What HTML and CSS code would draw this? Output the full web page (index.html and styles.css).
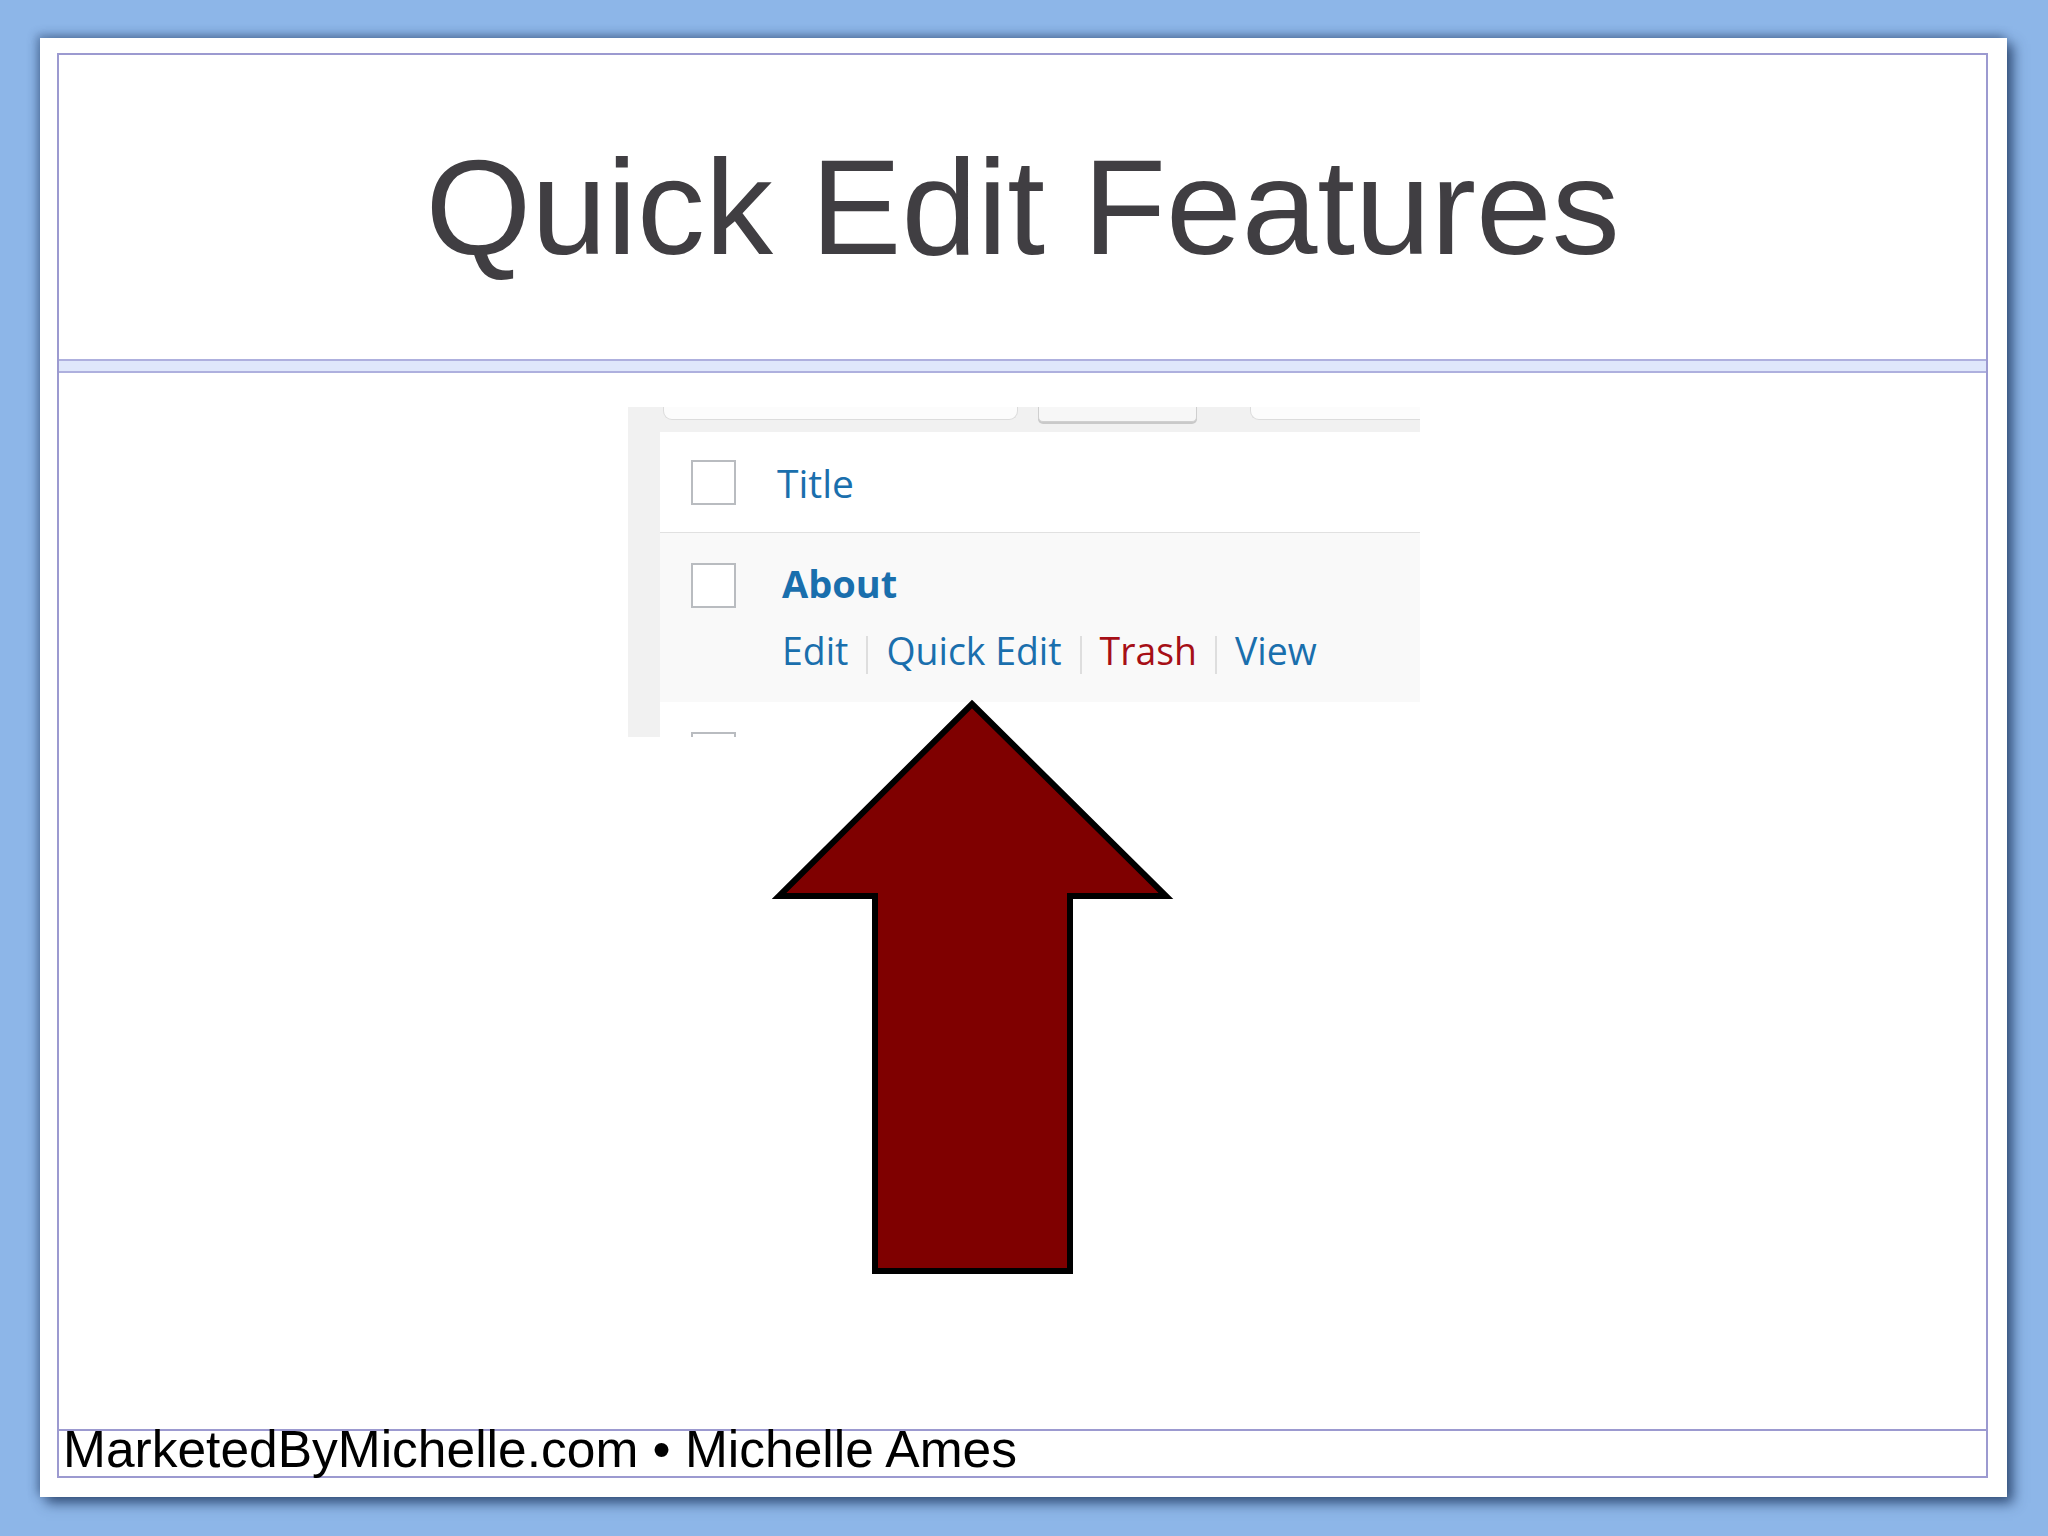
FILE: index.html
```html
<!DOCTYPE html>
<html lang="en">
<head>
<meta charset="utf-8">
<title>Quick Edit Features</title>
<link rel="stylesheet" href="styles.css">
</head>
<body>
<div class="slide">
  <div class="frame">
    <div class="title-area">
      <h1 class="title">Quick Edit Features</h1>
    </div>
    <div class="band"></div>
    <div class="content">
      <div class="shot">
        <div class="shot-side"></div>
        <div class="shot-main">
          <div class="toolbar">
            <div class="tb-search"></div>
            <div class="tb-btn"></div>
            <div class="tb-right"></div>
          </div>
          <div class="thead">
            <span class="cb"></span>
            <span class="col-title">Title</span>
          </div>
          <div class="trow">
            <span class="cb"></span>
            <div class="row-col">
              <div class="row-title">About</div>
              <div class="actions">
                <span class="act">Edit</span><span class="sep"></span><span class="act">Quick Edit</span><span class="sep"></span><span class="act trash">Trash</span><span class="sep"></span><span class="act">View</span>
              </div>
            </div>
          </div>
          <div class="tnext">
            <span class="cb"></span>
          </div>
        </div>
      </div>
      <svg class="arrow" width="405" height="582" viewBox="0 0 405 582" xmlns="http://www.w3.org/2000/svg">
        <polygon points="202,9 396,201 300,201 300,576 105,576 105,201 9,201" fill="#7f0000" stroke="#000" stroke-width="6" stroke-linejoin="miter"/>
      </svg>
    </div>
    <div class="footer">MarketedByMichelle.com • Michelle Ames</div>
  </div>
</div>
</body>
</html>
```
FILE: styles.css
```css
html, body {
  margin: 0;
  padding: 0;
}
body {
  width: 2048px;
  height: 1536px;
  background: #8db6e8;
  overflow: hidden;
  font-family: "Liberation Sans", Arial, sans-serif;
}
.slide {
  box-sizing: border-box;
  margin: 38px 0 0 40px;
  width: 1967px;
  height: 1459px;
  background: #ffffff;
  padding: 15px 19px 19px 17px;
  box-shadow: 6px 6px 12px rgba(30, 55, 95, 0.8), -3px -3px 9px rgba(30, 55, 95, 0.45);
}
.frame {
  box-sizing: border-box;
  height: 100%;
  border: 2px solid #9c9ad0;
  display: flex;
  flex-direction: column;
}
.title-area {
  height: 304px;
  flex: none;
}
.title {
  margin: 0;
  padding-top: 84px;
  font-family: "Liberation Sans", Arial, sans-serif;
  font-weight: normal;
  font-size: 136px;
  line-height: 136px;
  color: #403e42;
  text-align: center;
}
.band {
  flex: none;
  height: 10px;
  background: #dfe7fb;
  border-top: 2px solid #aeb0de;
  border-bottom: 2px solid #aeb0de;
}
.content {
  flex: 1;
  position: relative;
}
.shot {
  margin: 34px 0 0 569px;
  width: 792px;
  height: 330px;
  background: #f1f1f1;
  display: flex;
  overflow: hidden;
  font-family: "Open Sans", "Noto Sans", sans-serif;
}
.shot-side {
  width: 32px;
  flex: none;
}
.shot-main {
  flex: 1;
  display: flex;
  flex-direction: column;
}
.toolbar {
  height: 25px;
  flex: none;
  display: flex;
  align-items: flex-start;
}
.tb-search {
  margin-left: 3px;
  width: 355px;
  height: 13px;
  box-sizing: border-box;
  background: #fcfcfc;
  border: 1px solid #dcdcdc;
  border-top: none;
  border-radius: 0 0 9px 9px;
}
.tb-btn {
  margin-left: 20px;
  width: 159px;
  height: 15px;
  box-sizing: border-box;
  background: #f7f7f7;
  border: 1px solid #cfcfcf;
  border-top: none;
  border-radius: 0 0 5px 5px;
  box-shadow: 0 2px 0 #c9c9c9;
}
.tb-right {
  margin-left: 53px;
  flex: 1;
  height: 13px;
  box-sizing: border-box;
  background: #fcfcfc;
  border-left: 1px solid #dcdcdc;
  border-bottom: 1px solid #dcdcdc;
  border-radius: 0 0 0 9px;
}
.thead {
  height: 100px;
  flex: none;
  background: #ffffff;
  border-bottom: 1px solid #e1e1e1;
  display: flex;
  align-items: center;
  padding-left: 31px;
}
.cb {
  display: block;
  flex: none;
  width: 45px;
  height: 45px;
  box-sizing: border-box;
  border: 2px solid #b9bcc0;
  background: #ffffff;
}
.col-title {
  margin-left: 41px;
  font-size: 39px;
  line-height: 39px;
  color: #1a6fad;
}
.trow {
  height: 169px;
  flex: none;
  box-sizing: border-box;
  background: #f9f9f9;
  display: flex;
  align-items: flex-start;
  padding: 30px 0 0 31px;
}
.row-col {
  margin-left: 46px;
  padding-top: 2px;
}
.row-title {
  font-weight: 700;
  font-size: 38px;
  line-height: 37px;
  color: #1a6fad;
}
.actions {
  margin-top: 30px;
  font-size: 37.4px;
  line-height: 37px;
  color: #1a6fad;
  white-space: nowrap;
}
.act.trash {
  color: #a60f16;
}
.sep {
  display: inline-block;
  width: 2px;
  height: 38px;
  background: #dedede;
  margin: 0 18px;
  vertical-align: -9px;
}
.tnext {
  flex: 1;
  background: #ffffff;
  padding: 30px 0 0 31px;
  overflow: hidden;
}
.arrow {
  position: absolute;
  left: 711px;
  top: 322px;
}
.footer {
  flex: none;
  height: 45px;
  border-top: 2px solid #9c9ad0;
  padding-left: 4px;
  font-family: "Liberation Sans", Arial, sans-serif;
  font-size: 51.5px;
  line-height: 37px;
  color: #000000;
  white-space: nowrap;
}
```
